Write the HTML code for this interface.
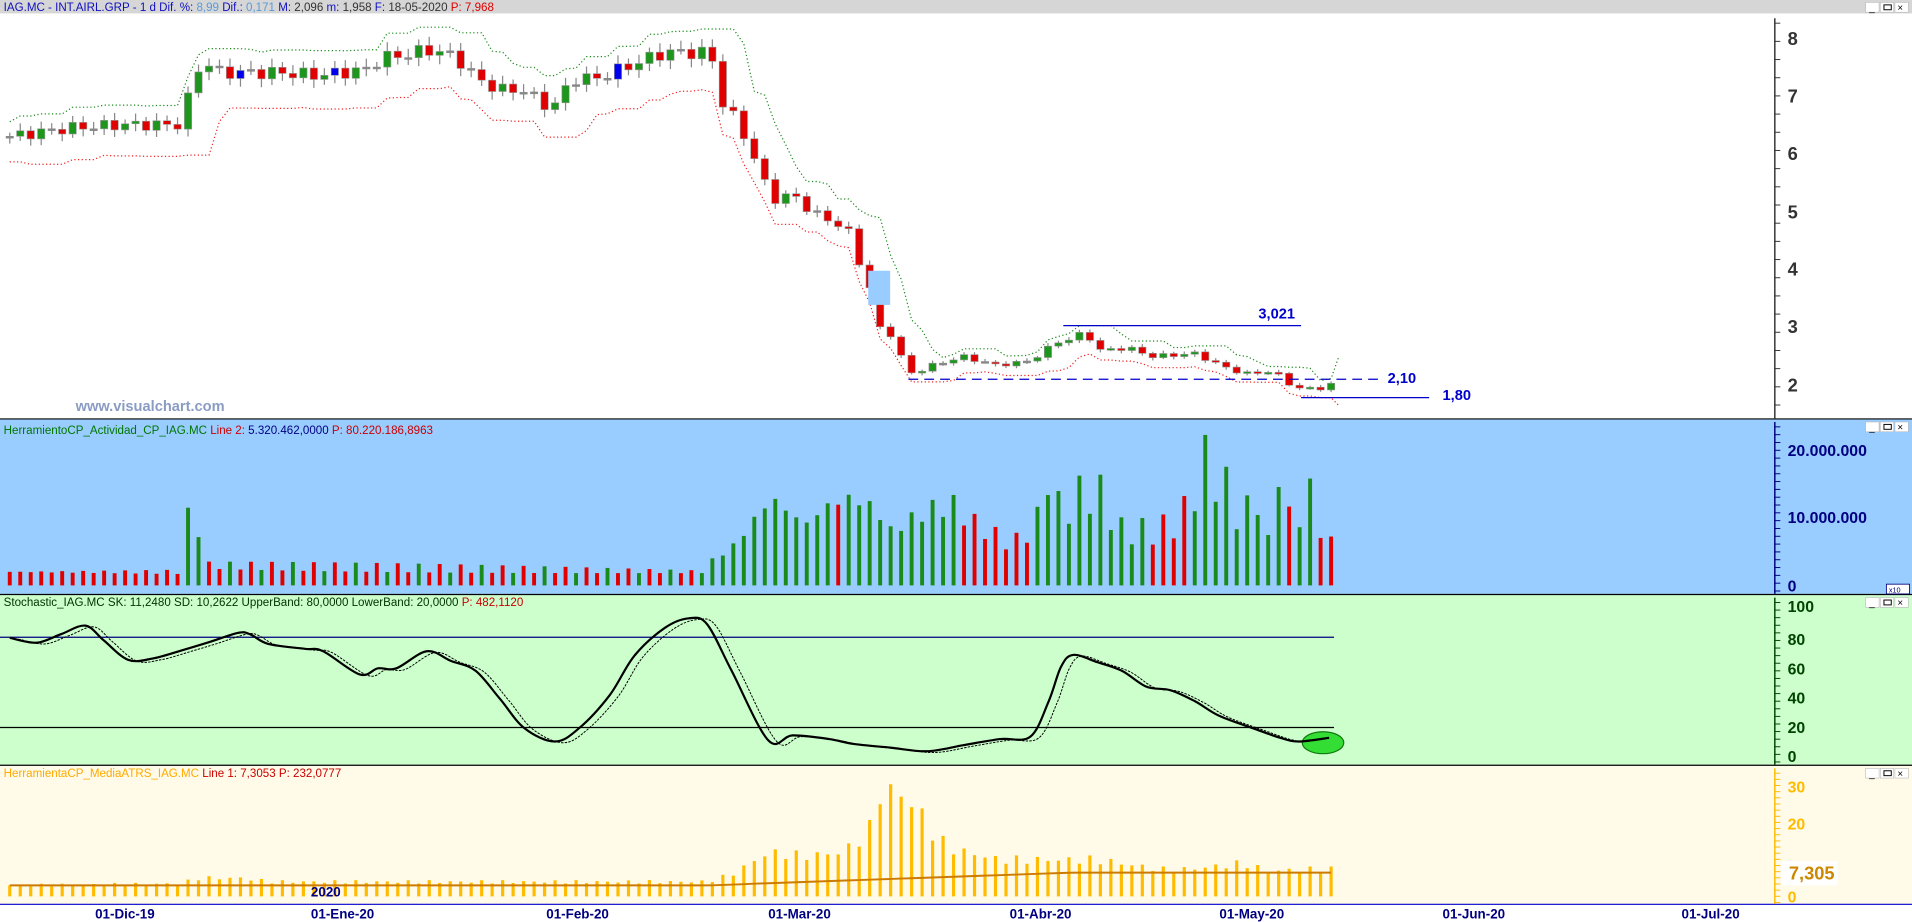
<!DOCTYPE html>
<html><head><meta charset="utf-8"><style>
html,body{margin:0;padding:0;background:#fff;width:1912px;height:922px;overflow:hidden}
svg{display:block}
text{font-family:"Liberation Sans",sans-serif}
</style></head><body>
<svg id="s" width="1912" height="922" viewBox="0 0 1568 756" preserveAspectRatio="none" xmlns="http://www.w3.org/2000/svg">
<rect x="0" y="0" width="1568" height="756" fill="#fff"/>
<rect x="0" y="0" width="1568" height="11" fill="#d6d6d6"/>
<rect x="0" y="344" width="1568" height="143" fill="#99ccff"/>
<rect x="0" y="488" width="1568" height="139" fill="#ccffcc"/>
<rect x="0" y="628" width="1568" height="113" fill="#fffbe8"/>
<line x1="0" y1="343.5" x2="1568" y2="343.5" stroke="#000"/>
<line x1="0" y1="487.5" x2="1568" y2="487.5" stroke="#000"/>
<line x1="0" y1="627.5" x2="1568" y2="627.5" stroke="#000"/>
<line x1="0" y1="741.5" x2="1568" y2="741.5" stroke="#0000cc"/>
<g id="g"></g>
<text x="3" y="9" font-size="9.5"><tspan fill="#1010c0">IAG.MC - INT.AIRL.GRP -  1 d  Dif. %: </tspan><tspan fill="#5a9ad8">8,99 </tspan><tspan fill="#1010c0"> Dif.: </tspan><tspan fill="#5a9ad8">0,171 </tspan><tspan fill="#1010c0"> M: </tspan><tspan fill="#333">2,096 </tspan><tspan fill="#1010c0"> m: </tspan><tspan fill="#333">1,958 </tspan><tspan fill="#1010c0"> F: </tspan><tspan fill="#333">18-05-2020 </tspan><tspan fill="#e00000"> P: 7,968</tspan></text>
<text x="3" y="356" font-size="9.5"><tspan fill="#007700">HerramientoCP_Actividad_CP_IAG.MC </tspan><tspan fill="#cc0000"> Line 2: </tspan><tspan fill="#000080">5.320.462,0000 </tspan><tspan fill="#cc0000"> P: 80.220.186,8963</tspan></text>
<text x="3" y="497" font-size="9.5"><tspan fill="#003300">Stochastic_IAG.MC  SK: 11,2480  SD: 10,2622  UpperBand: 80,0000  LowerBand: 20,0000 </tspan><tspan fill="#cc0000"> P: 482,1120</tspan></text>
<text x="3" y="637" font-size="9.5"><tspan fill="#ffaa00">HerramientaCP_MediaATRS_IAG.MC </tspan><tspan fill="#cc0000"> Line 1: 7,3053  P: 232,0777</tspan></text>
<text x="62" y="337" font-size="12" font-weight="bold" fill="#8a9cc4">www.visualchart.com</text>
<g font-weight="bold" font-size="12" fill="#0000cc">
<text x="1032" y="261">3,021</text><text x="1138" y="314">2,10</text><text x="1183" y="328">1,80</text></g>
<g font-size="15" font-weight="bold" fill="#333">
<text x="1466" y="37">8</text><text x="1466" y="84">7</text><text x="1466" y="131">6</text><text x="1466" y="179">5</text><text x="1466" y="226">4</text><text x="1466" y="273">3</text><text x="1466" y="321">2</text></g>
<g font-size="13" font-weight="bold" fill="#000080">
<text x="1466" y="374">20.000.000</text><text x="1466" y="429">10.000.000</text><text x="1466" y="485">0</text></g>
<g font-size="13" font-weight="bold" fill="#004400">
<text x="1466" y="502">100</text><text x="1466" y="529">80</text><text x="1466" y="553">60</text><text x="1466" y="577">40</text><text x="1466" y="601">20</text><text x="1466" y="625">0</text></g>
<rect x="1461" y="706" width="46" height="20" fill="#fff"/>
<g font-size="13" font-weight="bold" fill="#ffbb00">
<text x="1466" y="650">30</text><text x="1466" y="680">20</text><text x="1466" y="740">0</text></g>
<text x="1467" y="721" font-size="15" font-weight="bold" fill="#cc8800">7,305</text>
<g font-size="11" font-weight="bold" fill="#000080">
<text x="78" y="753">01-Dic-19</text><text x="255" y="753">01-Ene-20</text><text x="255" y="735">2020</text><text x="448" y="753">01-Feb-20</text><text x="630" y="753">01-Mar-20</text><text x="828" y="753">01-Abr-20</text><text x="1000" y="753">01-May-20</text><text x="1183" y="753">01-Jun-20</text><text x="1379" y="753">01-Jul-20</text></g>
<rect x="1547" y="479" width="19" height="8" fill="#fff" stroke="#000080" stroke-width=".7"/>
<text x="1549" y="486" font-size="6" fill="#000080">x10</text>
</svg>
<script>
const g=document.getElementById('g');let h='';
const ns=(t,a)=>{h+='<'+t+' '+Object.entries(a).map(([k,v])=>k+'="'+v+'"').join(' ')+'/>';};
function interp(kp,x){for(let i=0;i<kp.length-1;i++){if(x>=kp[i][0]&&x<=kp[i+1][0]){const t=(x-kp[i][0])/(kp[i+1][0]-kp[i][0]);return kp[i][1]+t*(kp[i+1][1]-kp[i][1]);}}return x<kp[0][0]?kp[0][1]:kp[kp.length-1][1];}
[[15,343,'#333'],[346,487,'#000080'],[490,627,'#004400'],[630,741,'#ffbb00']].forEach(a=>{ns('line',{x1:1455.5,y1:a[0],x2:1455.5,y2:a[1],stroke:a[2],'stroke-width':1.2});for(let y=a[0]+4;y<a[1];y+=(a[1]-a[0])/22){ns('line',{x1:1455,y1:y,x2:1460,y2:y,stroke:a[2],'stroke-width':.8});}});
[2,346,490,630].forEach(y=>{for(let k=0;k<3;k++)ns('rect',{x:1530+k*12,y:y,width:11,height:8,fill:'#fff',stroke:'#bbb','stroke-width':.5});
h+='<text x="1533" y="'+(y+7)+'" font-size="8" fill="#000">_</text><rect x="1545" y="'+(y+2)+'" width="6" height="4" fill="none" stroke="#000" stroke-width=".8"/><text x="1556" y="'+(y+7)+'" font-size="8" fill="#000">×</text>';});
const pk=[[8,6.3],[60,6.45],[100,6.5],[150,6.5],[158,7.35],[168,7.6],[180,7.4],[230,7.4],[260,7.35],[300,7.45],[312,7.65],[330,7.7],[355,7.8],[375,7.65],[390,7.3],[410,7.1],[430,7.1],[445,6.85],[455,6.85],[470,7.3],[490,7.3],[520,7.55],[545,7.75],[575,7.75],[585,7.6],[593,6.85],[605,6.55],[615,6.1],[625,5.6],[633,5.2],[650,5.3],[665,5.0],[680,4.85],[695,4.7],[703,4.2],[712,3.8],[720,3.0],[730,2.9],[740,2.45],[748,2.2],[765,2.35],[790,2.5],[815,2.35],[840,2.4],[855,2.55],[865,2.75],[880,2.8],[890,2.95],[900,2.6],[925,2.65],[945,2.5],[980,2.55],[990,2.45],[1000,2.35],[1020,2.2],[1045,2.25],[1055,2.05],[1065,1.95],[1085,1.95],[1095,2.05]];
const vk=[[8,2],[150,2],[158,17],[166,3],[580,2],[585,4],[600,5.5],[620,10],[632,13],[660,9],[680,12],[700,13],[720,11],[730,8],[760,11],[780,12],[800,9],[830,6],[850,9],[862,19],[870,9],[880,13],[900,14],[920,8],[950,8],[970,10],[987,18],[1000,16],[1020,9],[1030,15],[1040,6],[1048,20],[1055,9],[1075,13],[1085,8],[1093,5.5]];
const ak=[[8,3],[150,3.5],[160,5],[200,5],[220,4],[580,4],[600,6],[630,12],[660,11],[690,12],[712,17],[720,28],[735,29],[745,26],[755,23],[765,17],[780,13],[820,10],[900,10],[960,7],[990,8],[1020,9],[1040,7],[1095,7.5]];
const Y=p=>31+(8-p)*47.5;
const N=127,X=i=>8+i*8.6;
let cl=[];for(let i=0;i<N;i++){const x=X(i);let p=interp(pk,x);p+=Math.sin(i*2.3)*0.09*p/6;cl.push(p);}
let up=[],lo=[];
for(let i=0;i<N;i++){const o=i?cl[i-1]:cl[0];const c=cl[i];const hi=Math.max(o,c)*(1+0.01+0.01*Math.abs(Math.sin(i*1.7)));const lw=Math.min(o,c)*(1-0.01-0.01*Math.abs(Math.cos(i*1.3)));
let m1=-1e9,m2=1e9;for(let j=Math.max(0,i-3);j<=i;j++){m1=Math.max(m1,cl[j]);m2=Math.min(m2,cl[j]);}
up.push([X(i),Y(m1*1.04)]);lo.push([X(i),Y(m2*0.93)]);
const x=X(i);ns('line',{x1:x,y1:Y(hi),x2:x,y2:Y(lw),stroke:'#888','stroke-width':1});
let col=c>=o?'#1e961e':'#e00000';if(Math.abs(c-o)<0.006*c){col='#888';}else if(i%9==4&&c>=o&&i<100)col='#0000ee';
const t=Y(Math.max(o,c)),b=Y(Math.min(o,c));ns('rect',{x:x-3,y:t,width:6,height:Math.max(1.5,b-t),fill:col,stroke:col=='#888'?'#888':'#999','stroke-width':.5});}
const pl=a=>a.map(p=>p[0].toFixed(1)+','+p[1].toFixed(1)).join(' ');
ns('polyline',{points:pl(up.concat([[1098,Y(2.5)]])),fill:'none',stroke:'#1a8a1a','stroke-width':1,'stroke-dasharray':'1,2'});
ns('polyline',{points:pl(lo.concat([[1098,Y(1.65)]])),fill:'none',stroke:'#ee2222','stroke-width':1,'stroke-dasharray':'1,2'});
ns('rect',{x:712,y:222,width:18,height:28,fill:'#99ccff'});
ns('line',{x1:872,y1:267,x2:1067,y2:267,stroke:'#0000cc','stroke-width':1});
ns('line',{x1:745,y1:311,x2:1132,y2:311,stroke:'#0000cc','stroke-width':1,'stroke-dasharray':'8,5'});
ns('line',{x1:1067,y1:326,x2:1172,y2:326,stroke:'#0000cc','stroke-width':1});
const redR=[[0,150],[680,695],[785,848],[938,978],[1050,1060],[1080,1100]];
for(let i=0;i<N;i++){const x=X(i);let v=interp(vk,x);v*=1+0.25*Math.sin(i*3.1);let col='#1a8a1a';
if(x<580&&x>165)col=(i%3==0)?'#1a8a1a':'#e00000';
redR.forEach(r=>{if(x>=r[0]&&x<=r[1])col='#e00000';});
const hgt=v*5.55;ns('rect',{x:x-1.6,y:480-hgt,width:3.2,height:hgt,fill:col});}
ns('line',{x1:0,y1:522.5,x2:1094,y2:522.5,stroke:'#000080','stroke-width':1});
ns('line',{x1:0,y1:596.5,x2:1094,y2:596.5,stroke:'#000'});
const sk=[[8,523],[30,527],[50,520],[70,513],[85,525],[105,541],[125,540],[150,533],[170,527],[195,519],[205,520],[220,528],[250,532],[265,534],[295,553],[310,548],[325,548],[350,534],[370,542],[390,550],[410,573],[430,597],[455,608],[475,597],[500,570],[520,538],[545,515],[565,507],[580,512],[600,550],[630,607],[650,603],[680,606],[700,610],[730,613],[760,616],[790,611],[820,606],[845,604],[860,575],[870,547],[880,537],[900,543],[920,550],[940,563],[960,566],[980,575],[1000,587],[1030,598],[1050,605],[1065,608],[1090,605]];
function smooth(p){let d='M'+p[0][0]+','+p[0][1];for(let i=0;i<p.length-1;i++){const p0=p[Math.max(0,i-1)],p1=p[i],p2=p[i+1],p3=p[Math.min(p.length-1,i+2)];
const c1=[p1[0]+(p2[0]-p0[0])/6,p1[1]+(p2[1]-p0[1])/6],c2=[p2[0]-(p3[0]-p1[0])/6,p2[1]-(p3[1]-p1[1])/6];
d+=' C'+c1[0].toFixed(1)+','+c1[1].toFixed(1)+' '+c2[0].toFixed(1)+','+c2[1].toFixed(1)+' '+p2[0]+','+p2[1];}return d;}
h+='<path d="'+smooth(sk.map(p=>[p[0]+7,p[1]+1]).filter(p=>p[0]<1094))+'" fill="none" stroke="#000" stroke-width="0.8" stroke-dasharray="2,1"/>';
ns('ellipse',{cx:1085,cy:609,rx:17,ry:9,fill:'#33dd33',stroke:'#117711','stroke-width':1});
h+='<path d="'+smooth(sk)+'" fill="none" stroke="#000" stroke-width="1.8"/>';
let al=[];for(let i=0;i<N;i++){const x=X(i);let a=interp(ak,x)*(1+0.12*Math.sin(i*2.7));ns('rect',{x:x-1.3,y:735-a*3,width:2.6,height:a*3,fill:'#ffbb00'});al.push([x,735-(3+3.5*Math.min(1,Math.max(0,(x-580)/300)))*3]);}
ns('polyline',{points:pl(al),fill:'none',stroke:'#cc7a00','stroke-width':1.6});
g.innerHTML=h;
</script>
</body></html>
